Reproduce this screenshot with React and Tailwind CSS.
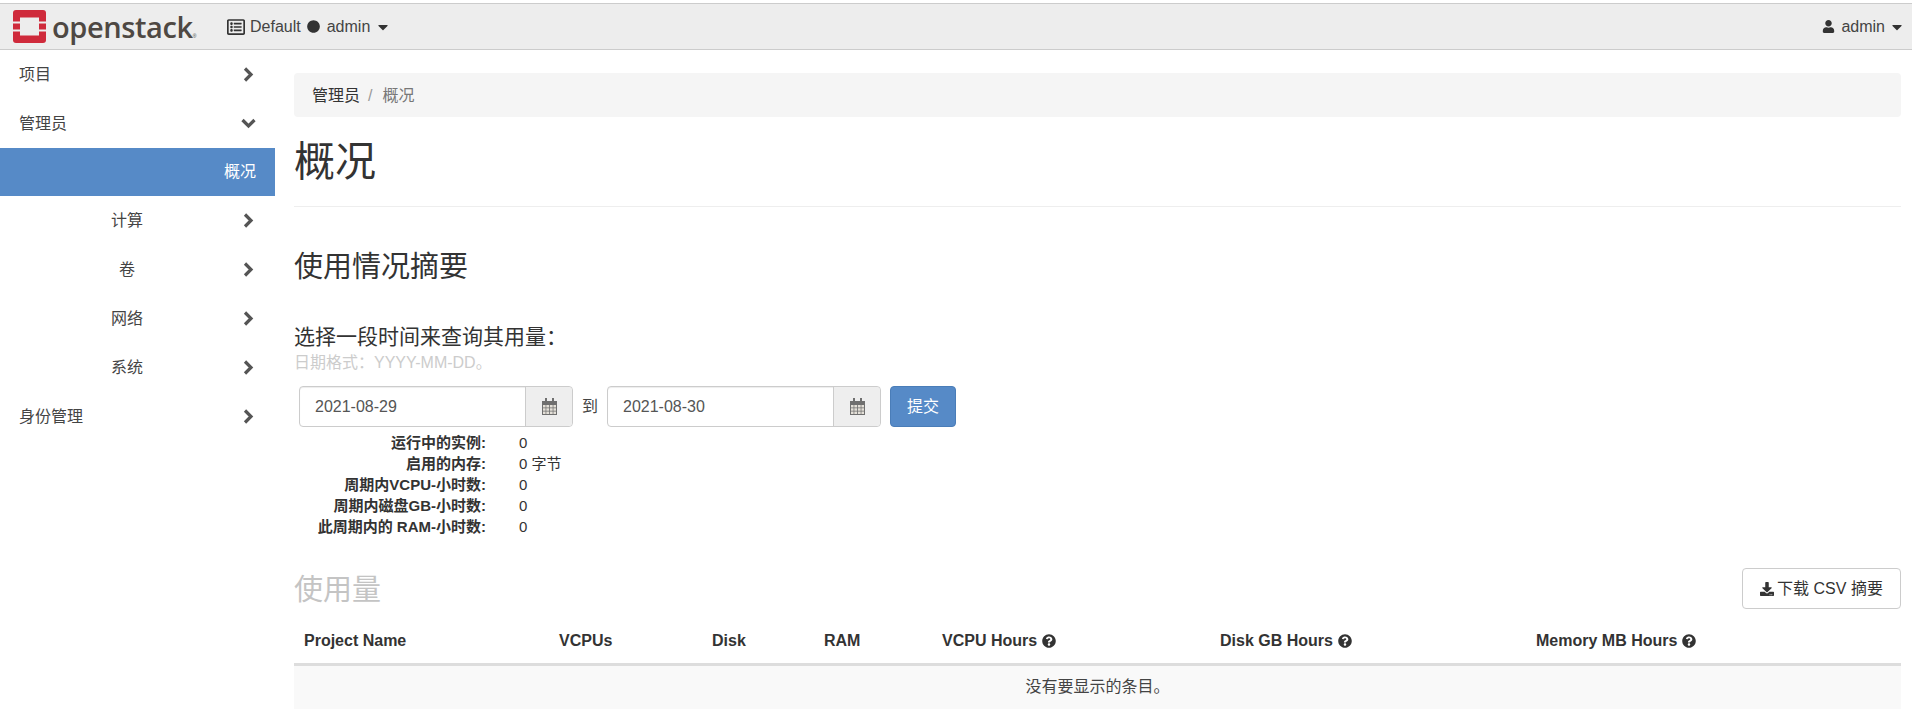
import React from 'react';
import { FaUser, FaDownload, FaQuestionCircle, FaCircle, FaCaretDown, FaRegListAlt } from 'react-icons/fa';

const CalendarIcon = () => (
  <svg width="15" height="17" viewBox="0 0 15 17" fill="#6f6f6f">
    <path d="M0 3h15v14H0z" />
    <path d="M3 0h2v4H3zM10 0h2v4h-2z" />
    <path fill="#e4e0d8" d="M1 7h2.600v2.500H1zM4.300 7h2.800v2.500H4.300zM7.900 7h2.800v2.500H7.900zM11.400 7H14v2.500h-2.600zM1 10.300h2.600v2.500H1zM4.300 10.300h2.800v2.500H4.300zM7.900 10.300h2.800v2.500H7.900zM11.400 10.300H14v2.500h-2.600zM1 13.500h2.600V16H1zM4.300 13.500h2.800V16H4.300zM7.900 13.500h2.800V16H7.900zM11.400 13.500H14V16h-2.600z" />
  </svg>
);

const Logo = () => (
  <svg width="33" height="33" viewBox="0 0 33 33" className="shrink-0">
    <path fill="#cf2a3b" d="M3 0h27a3 3 0 0 1 3 3v27a3 3 0 0 1-3 3H3a3 3 0 0 1-3-3V3a3 3 0 0 1 3-3z" />
    <path fill="#ededed" d="M7 7.500h19v18H7z" />
    <path fill="#ededed" d="M0 11.500h7v2H0zM0 19.500h7v2H0zM26 11.500h7v2h-7zM26 19.500h7v2h-7z" />
  </svg>
);

const ChevronRight = () => (
  <svg width="11" height="15" viewBox="0 0 11 15" fill="none" stroke="#555" strokeWidth="3.200">
    <path d="M2 1.500 8 7.500 2 13.500" />
  </svg>
);

const ChevronDown = () => (
  <svg width="15" height="11" viewBox="0 0 15 11" fill="none" stroke="#555" strokeWidth="3.200">
    <path d="M1.500 2 7.500 8 13.500 2" />
  </svg>
);

const DateInput = ({ value }) => (
  <div className="flex h-[41px] w-[274px] rounded border border-[#ccc] shadow-[inset_0_1px_1px_rgba(0,0,0,0.075)]">
    <div className="flex-1 flex items-center pl-[15px] text-[#555]">{value}</div>
    <div className="w-[47px] flex items-center justify-center bg-[#eee] border-l border-[#ccc] rounded-r">
      <CalendarIcon />
    </div>
  </div>
);

const SideItem = ({ label, sub, open }) => (
  <div className="h-[49px] flex items-center text-[#444]">
    <div className={sub ? 'w-[254px] -mr-[11px] text-center' : 'w-[243px] pl-[19px]'}>{label}</div>
    {open ? <div className="-ml-[2px]"><ChevronDown /></div> : <ChevronRight />}
  </div>
);

const stats = [
  ['运行中的实例:', '0'],
  ['启用的内存:', '0 字节'],
  ['周期内VCPU-小时数:', '0'],
  ['周期内磁盘GB-小时数:', '0'],
  ['此周期内的 RAM-小时数:', '0'],
];

const columns = [
  { label: 'Project Name', width: 'w-[255px]' },
  { label: 'VCPUs', width: 'w-[153px]' },
  { label: 'Disk', width: 'w-[112px]' },
  { label: 'RAM', width: 'w-[118px]' },
  { label: 'VCPU Hours', width: 'w-[278px]', help: true },
  { label: 'Disk GB Hours', width: 'w-[316px]', help: true },
  { label: 'Memory MB Hours', width: 'w-[375px]', help: true },
];

export default function App() {
  return (
    <div className="w-[1912px] h-[720px] overflow-hidden bg-white text-[#333] text-base font-['Liberation_Sans','Noto_Sans_CJK_SC',sans-serif]">
      {/* top bar */}
      <div className="mt-[3px] h-[47px] flex items-center bg-[#ededed] border-y border-[#ccc] text-[#444]">
        <div className="flex items-center pl-[13px] w-[227px]">
          <Logo />
          <span className="ml-[6px] text-[29px] leading-none font-semibold font-['Open_Sans',sans-serif] tracking-[-0.4px] text-[#4e4843]">openstack</span>
          <span className="text-[5px] self-end mb-[3px]">®</span>
        </div>
        <FaRegListAlt className="text-[18px] text-[#333]" />
        <span className="ml-[5px]">Default</span>
        <FaCircle className="ml-[6px] text-[13px] text-[#333]" />
        <span className="ml-[7px]">admin</span>
        <FaCaretDown className="ml-[5px] text-[16px] text-[#333]" />
        <div className="ml-auto flex items-center pr-[7px]">
          <FaUser className="text-[13px] text-[#333]" />
          <span className="ml-[6px]">admin</span>
          <FaCaretDown className="ml-[4px] text-[16px] text-[#333]" />
        </div>
      </div>

      <div className="flex">
        {/* sidebar */}
        <div className="w-[275px] shrink-0">
          <SideItem label="项目" />
          <SideItem label="管理员" open />
          <div className="h-[48px] bg-[#568ac7] text-white flex items-center justify-end pr-[19px]">概况</div>
          <SideItem label="计算" sub />
          <SideItem label="卷" sub />
          <SideItem label="网络" sub />
          <SideItem label="系统" sub />
          <SideItem label="身份管理" />
        </div>

        {/* main */}
        <div className="w-[1607px] ml-[19px] pt-[23px]">
          <div className="h-[44px] bg-[#f5f5f5] rounded flex items-center px-[18px] pt-[1px]">
            <span>管理员</span>
            <span className="text-[#999] ml-2 mr-[10px]">/</span>
            <span className="text-[#777]">概况</span>
          </div>
          <h1 className="text-[41px] leading-none mt-[25px] pb-[23px] border-b border-[#eee]">概况</h1>
          <h2 className="text-[29px] leading-none mt-[46px]">使用情况摘要</h2>
          <div className="text-[21px] leading-none mt-[44px]">选择一段时间来查询其用量：</div>
          <div className="text-[#ccc] leading-none mt-[8px]">日期格式：YYYY-MM-DD。</div>
          <div className="flex items-center mt-[15px] ml-[5px]">
            <DateInput value="2021-08-29" />
            <span className="ml-[9px] mr-[9px] text-[#444]">到</span>
            <DateInput value="2021-08-30" />
            <button className="ml-[9px] w-[66px] h-[41px] bg-[#568ac7] border border-[#4a7db8] rounded text-white">提交</button>
          </div>
          <div className="mt-[5px] text-[15px] leading-[21px]">
            {stats.map(([label, value]) => (
              <div key={label} className="flex">
                <div className="w-[192px] text-right font-bold">{label}</div>
                <div className="ml-[33px]">{value}</div>
              </div>
            ))}
          </div>
          <div className="flex items-start justify-between mt-[31px]">
            <div className="text-[29px] leading-none text-[#c4c4c4] mt-[8px]">使用量</div>
            <button className="w-[159px] h-[41px] border border-[#ccc] rounded flex items-center justify-center">
              <FaDownload className="text-[14px] mr-[3px]" />
              下载 CSV 摘要
            </button>
          </div>
          <table className="w-full table-fixed mt-[10px] border-collapse">
            <thead>
              <tr className="border-b-[3px] border-[#ddd]">
                {columns.map(col => (
                  <th key={col.label} className={`${col.width} h-[45px] px-[10px] text-left font-bold`}>
                    <span className="inline-flex items-center">
                      {col.label}
                      {col.help && <FaQuestionCircle className="ml-[5px] text-[14px]" />}
                    </span>
                  </th>
                ))}
              </tr>
            </thead>
            <tbody>
              <tr className="bg-[#f9f9f9]">
                <td colSpan={7} className="h-[45px] text-center text-[#444]">没有要显示的条目。</td>
              </tr>
            </tbody>
          </table>
        </div>
      </div>
    </div>
  );
}
